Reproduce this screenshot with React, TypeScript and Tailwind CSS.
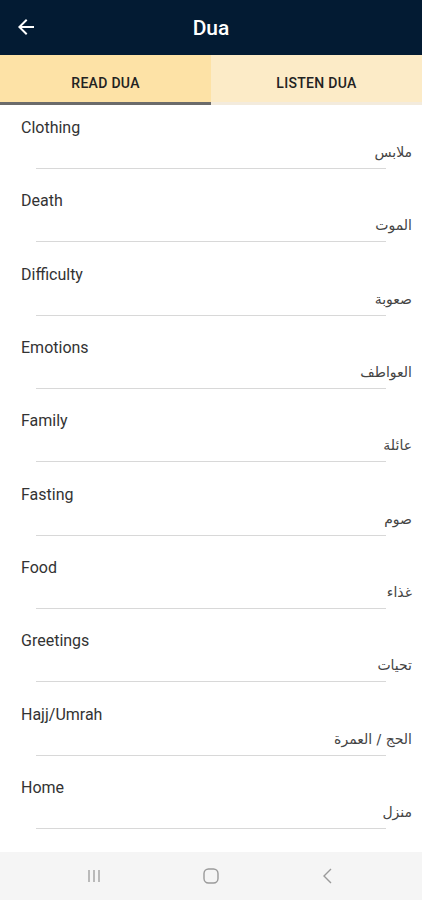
import React from "react";

const items: [string, string][] = [
  ["Clothing", "ملابس"],
  ["Death", "الموت"],
  ["Difficulty", "صعوبة"],
  ["Emotions", "العواطف"],
  ["Family", "عائلة"],
  ["Fasting", "صوم"],
  ["Food", "غذاء"],
  ["Greetings", "تحيات"],
  ["Hajj/Umrah", "الحج / العمرة"],
  ["Home", "منزل"],
];

export default function App() {
  return (
    <div className="w-[422px] h-[900px] bg-white flex flex-col overflow-hidden" style={{ fontFamily: "Roboto, 'Liberation Sans', sans-serif" }}>
      <div className="h-[55px] bg-[#031b33] flex items-center relative shrink-0">
        <svg className="absolute left-[14px] top-[15px]" width="24" height="24" viewBox="0 0 24 24" fill="#ffffff">
          <path d="M20 11H7.83l5.59-5.59L12 4l-8 8 8 8 1.41-1.41L7.83 13H20v-2z" />
        </svg>
        <div className="flex-1 text-center text-white text-[21px] font-medium pt-[2px]">Dua</div>
      </div>
      <div className="h-[50px] flex shrink-0">
        <div className="flex-1 bg-[#fde2a6] flex flex-col">
          <div className="flex-1 flex items-center justify-center pt-[10px] text-[14px] font-medium text-[#222] tracking-[0.3px]">READ DUA</div>
          <div className="h-[3px] bg-[#6b6b6b]" />
        </div>
        <div className="flex-1 bg-[#fcebc7] flex flex-col">
          <div className="flex-1 flex items-center justify-center pt-[10px] text-[14px] font-medium text-[#222] tracking-[0.3px]">LISTEN DUA</div>
          <div className="h-[3px] bg-[#f3ebdd]" />
        </div>
      </div>
      <div className="flex-1 flex flex-col">
        {items.map(([en, ar]) => (
          <div key={en} className="h-[73.33px] shrink-0 pt-[11px] flex flex-col">
            <div className="pl-[21px] h-[24px] leading-[24px] text-[16px] text-[#333]">{en}</div>
            <div
              dir="rtl"
              className="pr-[10px] h-[24px] leading-[24px] text-[14px] text-[#444] text-right"
              style={{ fontFamily: "'DejaVu Sans', 'Noto Sans', sans-serif" }}
            >
              {ar}
            </div>
            <div className="mt-[4px] ml-[36px] mr-[36px] h-[1px] bg-[#d8d8d8]" />
          </div>
        ))}
      </div>
      <div className="h-[48px] bg-[#f5f5f5] flex items-center justify-center shrink-0">
        <div className="w-[117px] flex justify-center">
          <svg width="20" height="16" viewBox="0 0 20 16" stroke="#9a9a9a" strokeWidth="1.3">
            <line x1="5" y1="2" x2="5" y2="14" />
            <line x1="10" y1="2" x2="10" y2="14" />
            <line x1="15" y1="2" x2="15" y2="14" />
          </svg>
        </div>
        <div className="w-[117px] flex justify-center">
          <svg width="18" height="18" viewBox="0 0 18 18" fill="none" stroke="#9a9a9a" strokeWidth="1.4">
            <rect x="2" y="2" width="14" height="14" rx="4.5" />
          </svg>
        </div>
        <div className="w-[117px] flex justify-center">
          <svg width="16" height="18" viewBox="0 0 16 18" fill="none" stroke="#9a9a9a" strokeWidth="1.4">
            <polyline points="11,2 4,9 11,16" />
          </svg>
        </div>
      </div>
    </div>
  );
}
